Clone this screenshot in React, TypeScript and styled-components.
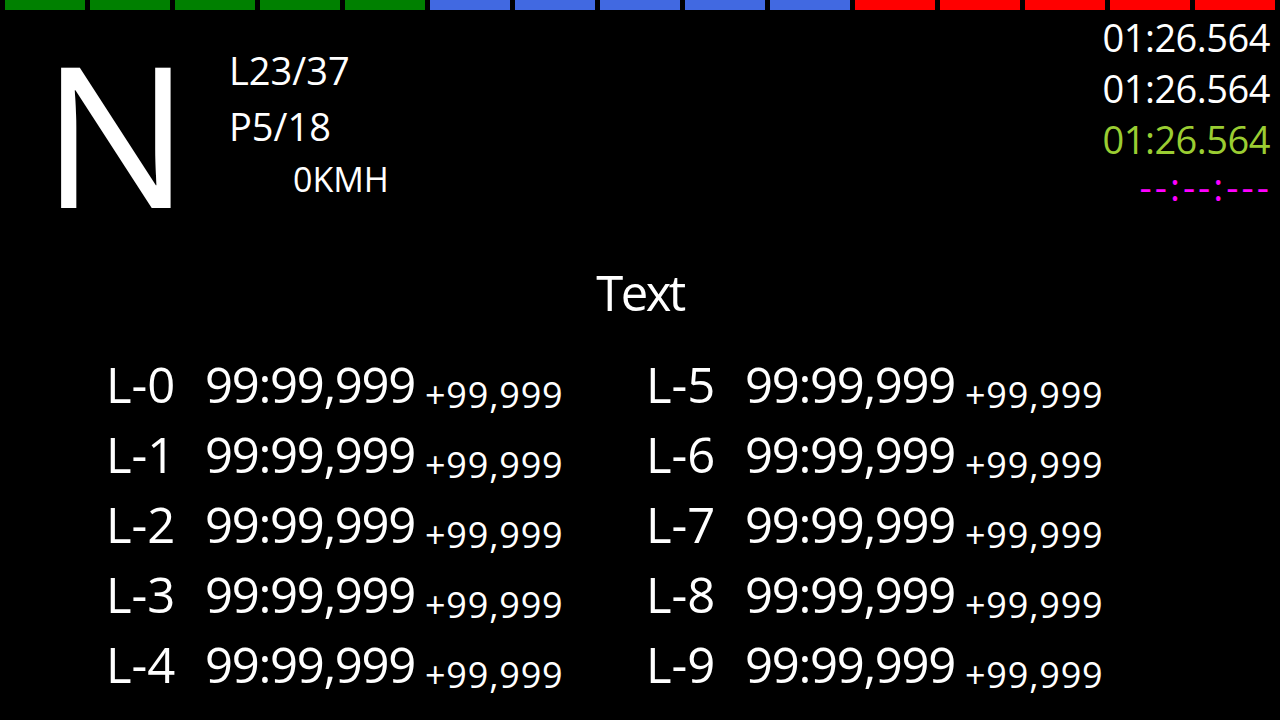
import React from "react";
import styled, { createGlobalStyle } from "styled-components";

const Global = createGlobalStyle`
  html, body { margin: 0; padding: 0; background: #000; }
  body { font-family: "Open Sans", "Noto Sans", sans-serif; color: #fff; }
`;

const Screen = styled.div`
  width: 1280px;
  height: 720px;
  background: #000;
  overflow: hidden;
  display: flex;
  flex-direction: column;
`;

const RevBar = styled.div`
  display: flex;
  gap: 5px;
  padding-left: 5px;
  height: 10px;
`;

const Seg = styled.div<{ $c: string }>`
  width: 80px;
  height: 10px;
  background: ${(p) => p.$c};
`;

const Header = styled.div`
  display: flex;
  align-items: flex-start;
  height: 230px;
`;

const Gear = styled.div`
  font-size: 196px;
  line-height: 196px;
  margin-top: 24px;
  margin-left: 42px;
  width: 187px;
`;

const Info = styled.div`
  display: flex;
  flex-direction: column;
  padding-top: 32px;
`;

const InfoLine = styled.div<{ $size?: number; $indent?: number; $shift?: number }>`
  font-size: ${(p) => p.$size ?? 38}px;
  line-height: 56px;
  padding-left: ${(p) => p.$indent ?? 0}px;
  margin-top: ${(p) => p.$shift ?? 0}px;
  white-space: nowrap;
`;

const Spacer = styled.div`
  flex: 1;
`;

const Times = styled.div`
  display: flex;
  flex-direction: column;
  align-items: flex-end;
  padding-top: 2px;
  padding-right: 10px;
`;

const TimeLine = styled.div<{ $color: string }>`
  font-size: 38px;
  line-height: 51px;
  letter-spacing: -0.5px;
  color: ${(p) => p.$color};
  white-space: nowrap;
`;

const EmptyTime = styled.div`
  font-size: 38px;
  line-height: 51px;
  margin-top: -4px;
  letter-spacing: 3px;
  margin-right: -2px;
  color: #ff00ff;
  white-space: nowrap;
`;

const Title = styled.div`
  font-size: 49px;
  line-height: 70px;
  letter-spacing: -2.5px;
  text-align: center;
  margin-top: 17px;
`;

const Laps = styled.div`
  display: grid;
  grid-template-columns: 540px 540px;
  grid-template-rows: repeat(5, 70px);
  grid-auto-flow: column;
  padding-left: 106px;
  margin-top: 22px;
`;

const LapRow = styled.div`
  display: flex;
  align-items: baseline;
  font-size: 49px;
  line-height: 70px;
  white-space: nowrap;
`;

const LapLabel = styled.span`
  width: 99px;
`;

const LapTime = styled.span`
  letter-spacing: -1.3px;
`;

const LapDelta = styled.span`
  font-size: 36px;
  letter-spacing: 0.8px;
  margin-left: 10px;
  position: relative;
  top: 5px;
`;

const colors = [
  ...Array(5).fill("#008000"),
  ...Array(5).fill("#4169E1"),
  ...Array(5).fill("#FF0000"),
];

export default function App() {
  return (
    <Screen>
      <Global />
      <RevBar>
        {colors.map((c, i) => (
          <Seg key={i} $c={c} />
        ))}
      </RevBar>
      <Header>
        <Gear>N</Gear>
        <Info>
          <InfoLine>L23/37</InfoLine>
          <InfoLine>P5/18</InfoLine>
          <InfoLine $size={34} $indent={64} $shift={-3}>0KMH</InfoLine>
        </Info>
        <Spacer />
        <Times>
          <TimeLine $color="#ffffff">01:26.564</TimeLine>
          <TimeLine $color="#ffffff">01:26.564</TimeLine>
          <TimeLine $color="#9ACD32">01:26.564</TimeLine>
          <EmptyTime>--:--:---</EmptyTime>
        </Times>
      </Header>
      <Title>Text</Title>
      <Laps>
        {Array.from({ length: 10 }, (_, i) => (
          <LapRow key={i}>
            <LapLabel>L-{i}</LapLabel>
            <LapTime>99:99,999</LapTime>
            <LapDelta>+99,999</LapDelta>
          </LapRow>
        ))}
      </Laps>
    </Screen>
  );
}
